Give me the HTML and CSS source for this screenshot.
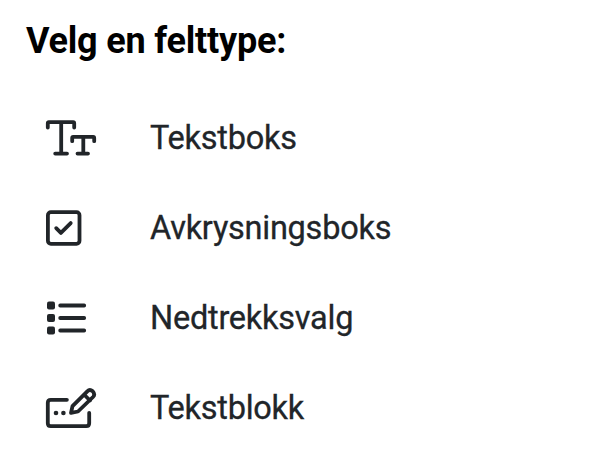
FILE: index.html
```html
<!DOCTYPE html>
<html lang="no">
<head>
<meta charset="utf-8">
<title>Velg en felttype</title>
<link rel="stylesheet" href="styles.css">
</head>
<body>
<h1 class="title">Velg en felttype:</h1>
<ul class="types">
<li class="type"><svg class="icon" viewBox="0 0 56 42"><path d="M2.800 9.500V5.200Q2.800 4.200 3.800 4.200H28.200Q29.200 4.200 29.200 5.200V9.500M16.200 4.200V35.600M10.200 35.600H22M27.200 23.200V19.900Q27.200 18.900 28.200 18.900H48.200Q49.200 18.900 49.200 19.900V23.200M38.300 18.900V35.600M32.500 35.600H43"/></svg><span>Tekstboks</span></li>
<li class="type"><svg class="icon" viewBox="0 0 56 42"><rect x="2.900" y="4.200" width="31.600" height="31.600" rx="3"/><path d="M11.200 20.200L15.900 24.900L25.700 15.100"/></svg><span>Avkrysningsboks</span></li>
<li class="type"><svg class="icon" viewBox="0 0 56 42"><path d="M15.200 7.500H39.200M15.200 20H39.200M15.200 32.500H39.200"/><g class="solid"><rect x="2" y="3.600" width="8" height="7.800" rx="2"/><rect x="2" y="16.100" width="8" height="7.800" rx="2"/><rect x="2" y="28.600" width="8" height="7.800" rx="2"/></g></svg><span>Nedtrekksvalg</span></li>
<li class="type"><svg class="icon" viewBox="0 0 56 42"><path d="M21.900 11.800H5.800Q2.800 11.800 2.800 14.800V35.200Q2.800 38.200 5.800 38.200H41.200Q44.200 38.200 44.200 35.200V24.800M26 24.900L27.500 18.200L42.300 3.300Q44.800 .800 47.700 3.300Q50.500 6.400 48 9L33 23.500ZM39 6.500L45 12.500"/><g class="solid"><circle cx="11" cy="25" r="2.300"/><circle cx="18.400" cy="25" r="2.300"/></g></svg><span>Tekstblokk</span></li>
</ul>
</body>
</html>
```
FILE: styles.css
```css
body { margin: 0; padding: 20px 26px; background: #fff; color: #212529; font-family: Roboto, sans-serif; }
.title { margin: 0 0 31px; font-size: 36px; line-height: 42px; font-weight: 700; color: #000; letter-spacing: -0.2px; }
.types { margin: 0; padding: 0; list-style: none; }
.type { display: flex; align-items: center; height: 90px; padding-left: 19px; gap: 49px; font-size: 32.5px; letter-spacing: -0.25px; -webkit-text-stroke: 0.3px currentColor; }
.type span { padding-bottom: 1px; }
.icon { width: 56px; height: 42px; margin-top: 2px; fill: none; stroke: currentColor; stroke-width: 3.8; stroke-linecap: round; stroke-linejoin: round; }
.solid { fill: currentColor; stroke: none; }
```
